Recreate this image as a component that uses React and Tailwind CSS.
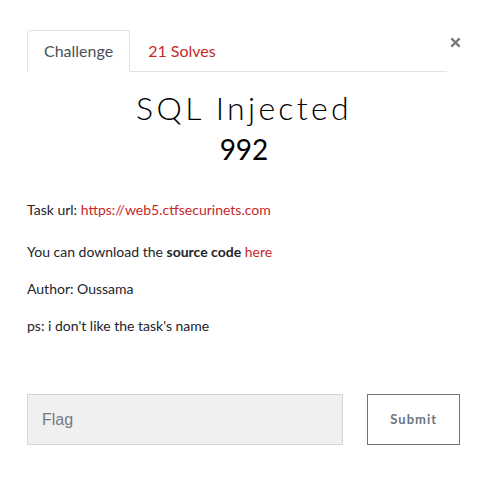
import React, { useState } from 'react';

// --- ICONS ---
const CloseIcon = (props) => (
  <svg xmlns="http://www.w3.org/2000/svg" viewBox="0 0 12 12" fill="none" stroke="currentColor" strokeWidth="2.4" strokeLinecap="butt" {...props}><line x1="1.5" y1="1.5" x2="10.5" y2="10.5" /><line x1="10.5" y1="1.5" x2="1.5" y2="10.5" /></svg>
);

const Tabs = ({ active, setActive }) => (
  <div className="flex items-end border-b border-[#dee2e6] w-[420px]">
    <button
      onClick={() => setActive('challenge')}
      className={`h-[42px] px-[16px] -mb-px rounded-t-[4px] text-[16px] ${active === 'challenge' ? 'border border-[#dee2e6] border-b-white bg-white text-[#495057]' : 'border border-transparent text-[#c62828]'}`}
    >
      Challenge
    </button>
    <button
      onClick={() => setActive('solves')}
      className={`h-[42px] px-[17px] -mb-px rounded-t-[4px] text-[16px] ${active === 'solves' ? 'border border-[#dee2e6] border-b-white bg-white text-[#495057]' : 'border border-transparent text-[#c62828]'}`}
    >
      21 Solves
    </button>
  </div>
);

export default function App() {
  const [tab, setTab] = useState('challenge');
  const [flag, setFlag] = useState('');

  return (
    <div className="w-[487px] h-[492px] bg-white font-['Lato','Noto_Sans',sans-serif] text-[#212529]">
      <div className="pt-[30px] px-[27px]">
        <div className="flex justify-between">
          <Tabs active={tab} setActive={setTab} />
          <button className="mt-[6px] mr-[-1px] h-[12px] text-[#777]">
            <CloseIcon className="w-[11px] h-[11px]" />
          </button>
        </div>

        <div className="flex flex-col items-center w-[434px] mt-[16px]">
          <h1 className="text-[32px] leading-[40px] font-light tracking-[3.3px] text-black">SQL Injected</h1>
          <h2 className="text-[28px] leading-[34px] mt-[4px] text-black">992</h2>
        </div>

        <div className="mt-[33px] text-[14px] leading-[21px] text-[#212529]">
          <p>Task url: <a href="#" className="text-[#c62828]">https://web5.ctfsecurinets.com</a></p>
          <p className="mt-[21px]">You can download the <strong className="font-bold">source code</strong> <a href="#" className="text-[#c62828]">here</a></p>
          <p className="mt-[16px]">Author: Oussama</p>
          <p className="mt-[16px]">ps: i don't like the task's name</p>
        </div>

        <div className="flex gap-[24px] mt-[58px]">
          <input
            value={flag}
            onChange={(e) => setFlag(e.target.value)}
            placeholder="Flag"
            className="w-[318px] h-[51px] bg-[#f0f0f0] border border-[#d3d5da] px-[14px] text-[16px] font-['Liberation_Sans',Arial,sans-serif] placeholder:text-[#737b85] outline-none"
          />
          <button className="w-[93px] h-[51px] border border-[#6c757d] text-[#6c757d] text-[13px] font-bold tracking-[1px]">
            Submit
          </button>
        </div>
      </div>
    </div>
  );
}
